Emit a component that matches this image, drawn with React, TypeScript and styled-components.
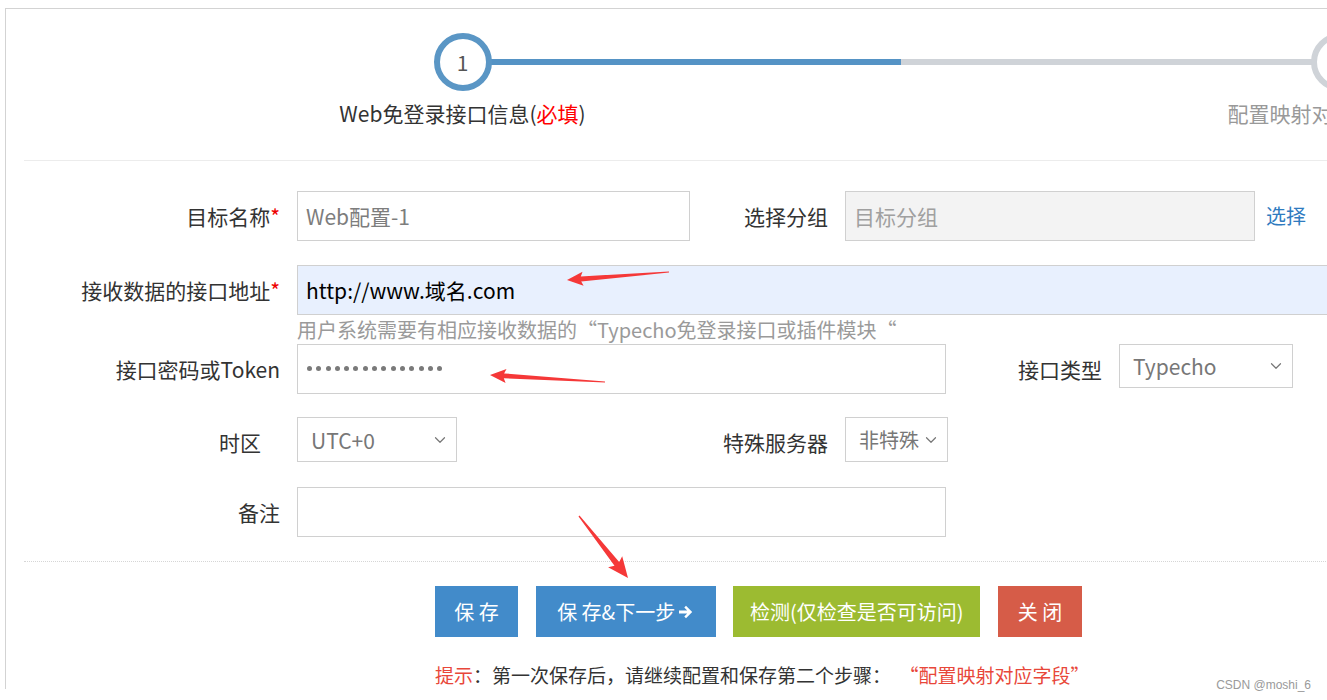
import React from 'react';
import styled, { createGlobalStyle } from 'styled-components';
import { ChevronDown } from 'lucide-react';

const GlobalStyle = createGlobalStyle`
  html, body {
    margin: 0;
    padding: 0;
    background: #fff;
    overflow: hidden;
  }
  body {
    font-family: "Noto Sans CJK SC", "Noto Sans", sans-serif;
    color: #333;
  }
`;

const Page = styled.div`
  position: relative;
  width: 1327px;
  height: 700px;
  overflow: hidden;
`;

const Panel = styled.div`
  margin: 8px 0 0 5px;
  width: 1900px;
  border-top: 1px solid #d3d3d3;
  border-left: 1px solid #d3d3d3;
  padding-left: 18px;
`;

/* ---------- wizard steps ---------- */

const Steps = styled.div`
  display: flex;
  padding: 24px 0 32px;
  border-bottom: 1px solid #ececec;
`;

const Step = styled.div<{ $left?: string; $right?: string }>`
  position: relative;
  width: 877px;
  display: flex;
  flex-direction: column;
  align-items: center;

  &::before,
  &::after {
    content: '';
    position: absolute;
    top: 26px;
    height: 6px;
    width: 50%;
  }
  &::before {
    left: 0;
    background: ${(p) => p.$left || 'transparent'};
  }
  &::after {
    right: 0;
    background: ${(p) => p.$right || 'transparent'};
  }
`;

const Circle = styled.div<{ $color: string }>`
  position: relative;
  z-index: 1;
  box-sizing: border-box;
  width: 58px;
  height: 58px;
  border-radius: 50%;
  border: 6px solid ${(p) => p.$color};
  background: #fff;
  color: #555;
  font-size: 21px;
  display: flex;
  align-items: center;
  justify-content: center;
`;

const StepLabel = styled.div<{ $muted?: boolean }>`
  margin-top: 7px;
  font-size: 21px;
  line-height: 30px;
  color: ${(p) => (p.$muted ? '#999' : '#333')};
  white-space: nowrap;
`;

const Req = styled.span`
  color: #f00;
`;

/* ---------- form ---------- */

const Form = styled.div`
  padding-top: 30px;
`;

const Row = styled.div<{ $mb?: number }>`
  display: flex;
  align-items: flex-start;
  margin-bottom: ${(p) => (p.$mb ?? 24)}px;
`;

const Label = styled.div<{ $w: number; $pr?: number }>`
  flex: none;
  box-sizing: border-box;
  width: ${(p) => p.$w}px;
  padding-right: ${(p) => p.$pr ?? 17}px;
  text-align: right;
  font-size: 21px;
  line-height: 50px;
  color: #333;
  white-space: nowrap;
`;

const Star = styled.span`
  color: #e00;
`;

const Input = styled.input<{ $w: number; $bg?: string; $color?: string }>`
  flex: none;
  box-sizing: border-box;
  width: ${(p) => p.$w}px;
  height: 50px;
  padding: 0 8px;
  border: 1px solid #d0d0d0;
  border-radius: 0;
  background: ${(p) => p.$bg || '#fff'};
  color: ${(p) => p.$color || '#7d7d7d'};
  font-family: inherit;
  font-size: 21px;
  outline: none;

  &::placeholder {
    color: #a0a0a0;
  }
`;

const Dots = styled.div<{ $w: number }>`
  flex: none;
  box-sizing: border-box;
  width: ${(p) => p.$w}px;
  height: 50px;
  padding: 0 9px;
  border: 1px solid #d0d0d0;
  display: flex;
  align-items: center;
  gap: 4.3px;
`;

const Dot = styled.span`
  width: 5px;
  height: 5px;
  border-radius: 50%;
  background: #7a7a7a;
  margin-top: -2px;
`;

const Select = styled.div<{ $w: number; $h: number; $fs?: number }>`
  flex: none;
  box-sizing: border-box;
  width: ${(p) => p.$w}px;
  height: ${(p) => p.$h}px;
  padding: 0 7px 0 13px;
  border: 1px solid #d0d0d0;
  display: flex;
  align-items: center;
  justify-content: space-between;
  font-size: ${(p) => p.$fs ?? 21}px;
  color: #777;
  white-space: nowrap;
  svg {
    flex: none;
    color: #777;
  }
`;

const PickLink = styled.a`
  margin-left: 11px;
  font-size: 20px;
  line-height: 50px;
  color: #2f7bbf;
  text-decoration: none;
`;

const Help = styled.div`
  margin-left: 273px;
  height: 29px;
  line-height: 29px;
  font-size: 20px;
  color: #9a9a9a;
  white-space: nowrap;
`;

const Divider = styled.div`
  border-top: 1px dotted #d6d6d6;
`;

const ButtonBar = styled.div`
  display: flex;
  gap: 17.7px;
  padding: 24px 0 0 411px;
`;

const Button = styled.button<{ $bg: string; $w: number }>`
  width: ${(p) => p.$w}px;
  height: 51px;
  padding: 0;
  border: none;
  border-radius: 0;
  background: ${(p) => p.$bg};
  color: #fff;
  font-family: inherit;
  font-size: 20px;
  display: flex;
  align-items: center;
  justify-content: center;
  gap: 3px;
  white-space: nowrap;
`;

const Hint = styled.div`
  margin: 24px 0 0 411px;
  font-size: 19px;
  line-height: 28px;
  color: #333;
  white-space: nowrap;
`;

const HintRed = styled.span`
  color: #e8473a;
`;

/* ---------- annotations ---------- */

const Overlay = styled.svg`
  position: absolute;
  left: 0;
  top: 0;
  pointer-events: none;
`;

const Watermark = styled.div`
  position: absolute;
  right: 16px;
  bottom: 8px;
  font-family: "Liberation Sans", Arial, sans-serif;
  font-size: 12px;
  color: #9a9a9a;
`;

// bold arrow like the old font-awesome arrow-right
const NextIcon = () => (
  <svg width="16" height="16" viewBox="0 0 16 16">
    <path
      d="M1 6.4h8.2L6.3 3.5 8 1.8 14.2 8 8 14.2 6.3 12.5l2.9-2.9H1z"
      fill="currentColor"
    />
  </svg>
);

type Pt = [number, number];

const arrowPoints = (tail: Pt, tip: Pt, hl: number, hw: number, sw: number) => {
  const dx = tip[0] - tail[0];
  const dy = tip[1] - tail[1];
  const len = Math.hypot(dx, dy);
  const ux = dx / len;
  const uy = dy / len;
  const nx = -uy;
  const ny = ux;
  const neck: Pt = [tip[0] - ux * hl, tip[1] - uy * hl];
  const back: Pt = [tip[0] - ux * hl * 1.15, tip[1] - uy * hl * 1.15];
  const pts: Pt[] = [
    [tail[0] + nx * 0.6, tail[1] + ny * 0.6],
    [neck[0] + nx * sw, neck[1] + ny * sw],
    [back[0] + nx * hw, back[1] + ny * hw],
    tip,
    [back[0] - nx * hw, back[1] - ny * hw],
    [neck[0] - nx * sw, neck[1] - ny * sw],
    [tail[0] - nx * 0.6, tail[1] - ny * 0.6],
  ];
  return pts.map((p) => `${p[0].toFixed(1)},${p[1].toFixed(1)}`).join(' ');
};

const arrows: { tail: Pt; tip: Pt; hl: number; hw: number; sw: number }[] = [
  { tail: [669, 272], tip: [567, 280], hl: 14, hw: 7, sw: 2.5 },
  { tail: [605, 382], tip: [490, 375], hl: 14, hw: 7, sw: 2.5 },
  { tail: [579, 516], tip: [628, 578], hl: 18, hw: 9, sw: 3 },
];

const App = () => {
  return (
    <Page>
      <GlobalStyle />
      <Panel>
        <Steps>
          <Step $right="#5593c5">
            <Circle $color="#5a96c5">1</Circle>
            <StepLabel>
              Web免登录接口信息(<Req>必填</Req>)
            </StepLabel>
          </Step>
          <Step $left="#cfd3d8" $right="#cfd3d8">
            <Circle $color="#cfd3d8">2</Circle>
            <StepLabel $muted>配置映射对应字段(选填)</StepLabel>
          </Step>
        </Steps>

        <Form>
          <Row>
            <Label $w={273}>
              目标名称<Star>*</Star>
            </Label>
            <Input $w={393} defaultValue="Web配置-1" />
            <Label $w={155}>选择分组</Label>
            <Input $w={410} $bg="#f3f3f3" placeholder="目标分组" readOnly />
            <PickLink href="#">选择</PickLink>
          </Row>

          <Row $mb={0}>
            <Label $w={273}>
              接收数据的接口地址<Star>*</Star>
            </Label>
            <Input $w={1200} $bg="#e8f0fe" $color="#000" defaultValue="http://www.域名.com" />
          </Row>
          <Help>用户系统需要有相应接收数据的“Typecho免登录接口或插件模块“</Help>

          <Row $mb={23}>
            <Label $w={273}>接口密码或Token</Label>
            <Dots $w={649}>
              {Array.from({ length: 15 }).map((_, i) => (
                <Dot key={i} />
              ))}
            </Dots>
            <Label $w={173}>接口类型</Label>
            <Select $w={174} $h={44}>
              Typecho
              <ChevronDown size={18} strokeWidth={1.6} />
            </Select>
          </Row>

          <Row $mb={20}>
            <Label $w={273} $pr={36}>
              时区
            </Label>
            <Select $w={160} $h={45}>
              UTC+0
              <ChevronDown size={18} strokeWidth={1.6} />
            </Select>
            <Label $w={388}>特殊服务器</Label>
            <Select $w={103} $h={45} $fs={20}>
              非特殊
              <ChevronDown size={18} strokeWidth={1.6} />
            </Select>
          </Row>

          <Row>
            <Label $w={273}>备注</Label>
            <Input $w={649} />
          </Row>

          <Divider />

          <ButtonBar>
            <Button $bg="#428bca" $w={83}>保 存</Button>
            <Button $bg="#428bca" $w={180}>
              保 存&amp;下一步
              <NextIcon />
            </Button>
            <Button $bg="#9cbb31" $w={247}>检测(仅检查是否可访问)</Button>
            <Button $bg="#d65c48" $w={84}>关 闭</Button>
          </ButtonBar>

          <Hint>
            <HintRed>提示</HintRed>：第一次保存后，请继续配置和保存第二个步骤：&nbsp;&nbsp;
            <HintRed>“配置映射对应字段”</HintRed>
          </Hint>
        </Form>
      </Panel>

      <Overlay width={1327} height={700}>
        {arrows.map((a, i) => (
          <polygon key={i} points={arrowPoints(a.tail, a.tip, a.hl, a.hw, a.sw)} fill="#f53838" />
        ))}
      </Overlay>
      <Watermark>CSDN @moshi_6</Watermark>
    </Page>
  );
};

export default App;
